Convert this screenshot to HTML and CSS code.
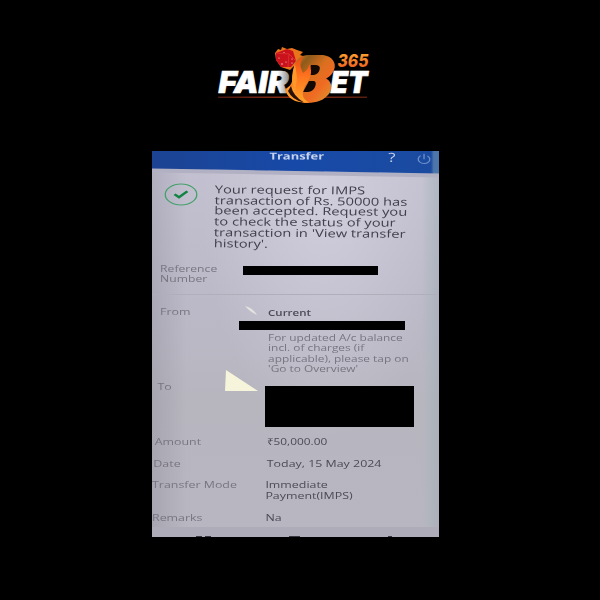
FILE: index.html
```html
<!DOCTYPE html>
<html lang="en">
<head>
<meta charset="utf-8">
<title>Fairbet365 transfer</title>
<link rel="stylesheet" href="styles.css">
</head>
<body>
<header class="brand">
<svg class="logo" width="165" height="70" viewBox="0 0 165 70" role="img" aria-label="Fairbet365">
  <defs>
    <linearGradient id="gold" x1="0" y1="0" x2="1" y2="1"><stop offset="0" stop-color="#e08a28"/><stop offset=".2" stop-color="#8d5a1a"/><stop offset=".45" stop-color="#d9701f"/><stop offset=".65" stop-color="#f06a22"/><stop offset="1" stop-color="#d8a033"/></linearGradient>
    <linearGradient id="flame" x1="0" y1="0" x2="0" y2="1"><stop offset="0" stop-color="#ef4a13"/><stop offset=".5" stop-color="#ff7a20"/><stop offset="1" stop-color="#ffa52a"/></linearGradient>
    <linearGradient id="num" x1="0" y1="0" x2="0" y2="1"><stop offset="0" stop-color="#ffae32"/><stop offset="1" stop-color="#e9571d"/></linearGradient>
    <linearGradient id="shade" x1="0" y1="0" x2="1" y2="0"><stop offset="0" stop-color="#fff"/><stop offset=".83" stop-color="#fff"/><stop offset="1" stop-color="#888"/></linearGradient>
    <linearGradient id="rule" x1="0" y1="0" x2="1" y2="0"><stop offset="0" stop-color="#5a1d10"/><stop offset=".5" stop-color="#b5391a"/><stop offset="1" stop-color="#6c2512"/></linearGradient>
  </defs>
  <rect x="8" y="56.6" width="149" height="1.2" fill="url(#rule)"/>
  <text class="word" x="8.500" y="53" textLength="70" lengthAdjust="spacingAndGlyphs" fill="url(#shade)" stroke="url(#shade)">FAIR</text>
  <text class="word" x="120.500" y="53" textLength="37" lengthAdjust="spacingAndGlyphs" fill="#fff" stroke="#fff">ET</text>
  <text class="number" x="127.5" y="27" textLength="31" lengthAdjust="spacingAndGlyphs" fill="url(#num)">365</text>
  <path d="M65 13 68 9 71 10 72 7 77 9 82 8 87 10 93 12 90 15 96 17 92 20 96 23 89 24 91 28 84 26 80 30 71 27 66 20Z" fill="#e8741c"/>
  <path d="M66 13 77 9 83 11 86 21 81 27 71 27 66 20Z" fill="#c9121b"/>
  <path d="M66 13 79 14 86 21M79 14 78 27" fill="none" stroke="#e23a35" stroke-width=".7"/>
  <g fill="#ffe4df"><circle cx="69" cy="18" r=".6"/><circle cx="72" cy="24" r=".7"/><circle cx="76" cy="22" r=".6"/><circle cx="82" cy="19" r=".6"/><circle cx="82" cy="23" r=".6"/><circle cx="74" cy="12.5" r=".5"/></g>
  <path d="M84 30C84 20 90 15 99 15H113C122 16 127 23 124 30C122 35 119 37 116 38.5C123 42 123 51 117 56C111 62 104 63 94 63L88 60Z" fill="url(#gold)"/>
  <path d="M101 25H106Q111 25.500 109.500 30Q108.500 34 104 35H99Z" fill="#130904"/>
  <path d="M99 41H104Q107 42 105 47Q103 51.500 98 52H93Z" fill="#130904"/>
  <path d="M99 24C104 33 99 40 95 46C92 53 91 58 99 62.500C87 63 77 58 75 49C81 47 83 41 83 34C83 25 87 20 94 16C88 24 91 28 93 33C97 30 99 28 99 24Z" fill="url(#flame)"/>
  <path d="M85 24C81 35 81 43 85 49C81 45 78 45 76 51C78 59 86 63 97 62.500C88 59 84 53 86 45C88 37 86 32 85 24Z" fill="#ff982a"/>
  <path d="M81 46Q83 56 94 62.500Q82 60 78 51" fill="#291006"/>
</svg>
</header>
<main class="photo">
  <div class="screen">
    <div class="bar"><span class="title">Transfer</span><span class="help">?</span>
      <svg class="power" width="11" height="12" viewBox="0 0 11 12"><path d="M3 2.4A4.3 4.3 0 1 0 8 2.4M5.5 .5V6" fill="none" stroke="currentColor"/></svg>
    </div>
    <div class="message">
      <svg class="ok" width="25" height="23" viewBox="0 0 25 23"><ellipse cx="12.5" cy="11.5" rx="11.7" ry="10.5" fill="none" stroke="#46a06c" stroke-width="1"/><path d="M7.7 11.2 11 14.3 17.2 8.3" fill="none" stroke="#118443" stroke-width="2.2"/></svg>
      <p>Your request for IMPS<br>transaction of Rs. 50000 has<br>been accepted. Request you<br>to check the status of your<br>transaction in 'View transfer<br>history'.</p>
    </div>
    <div class="row reference"><span class="label">Reference<br>Number</span></div>
    <div class="row from"><span class="label">From</span><div class="value"><b>Current</b><p class="note">For updated A/c balance<br>incl. of charges (if<br>applicable), please tap on<br>'Go to Overview'</p></div></div>
    <div class="row to"><span class="label">To</span></div>
    <div class="row amount"><span class="label">Amount</span><span class="value">₹50,000.00</span></div>
    <div class="row date"><span class="label">Date</span><span class="value">Today, 15 May 2024</span></div>
    <div class="row mode"><span class="label">Transfer Mode</span><span class="value">Immediate<br>Payment(IMPS)</span></div>
    <div class="row remarks"><span class="label">Remarks</span><span class="value">Na</span></div>
    <div class="foot"></div>
  </div>
  <svg class="glare" width="287" height="386" viewBox="0 0 287 386">
    <path d="M74 219 106 240H73Z" fill="#f7f4dc"/><path d="M93 155Q101 157 105 164Q98 161 93 155Z" fill="#e4e3df"/>
    <path d="M116 235.500h14m6 0h5m13 0h5m10 0h4m28 0h3" stroke="#77747f"/>
    <path d="M44 385.500h6m3 0h6m78 0h11m88 0h4" stroke="#383640" stroke-width="1"/>
  </svg>
  <i class="redact number-mask"></i><i class="redact account-mask"></i><i class="redact payee-mask"></i>
</main>
</body>
</html>
```
FILE: styles.css
```css
* { box-sizing: border-box; }
body { margin: 0; width: 600px; height: 600px; background: #000; overflow: hidden; font-family: "Open Sans", sans-serif; }
.brand { height: 151px; padding: 40px 0 0 210px; }
.logo { display: block; }
.word { font: italic 900 30px Inter, sans-serif; stroke-width: .7px; }
.number { font: italic 800 17.5px Inter, sans-serif; }
.photo {
  position: relative; width: 287px; height: 386px; margin-left: 152px; overflow: hidden;
  background: linear-gradient(90deg, rgba(70,70,85,.14), transparent 12%, transparent 94%, rgba(165,180,185,.4) 97%, rgba(150,165,175,.4)),
    radial-gradient(ellipse at 60% 12%, rgba(218,214,229,.6), transparent 50%),
    linear-gradient(#c4c2d2, #bbb9c7 40%, #b7b6bf 65%, #b8b6c1);
}
.screen {
  display: grid; width: 212.6px; height: 386px; transform: scaleX(1.35); transform-origin: 0 0;
  grid-template-rows: 20px 92px 32px 86px 55px 22px 21px 33px 15px 10px;
  color: #4c4a56; font-size: 9.2px; line-height: 10.7px; filter: blur(.35px);
}
p { margin: 0; }
.bar {
  display: flex; background: linear-gradient(90deg, #1c4392, #1749a8 50%, #1b4ba0 97%, #4d76aa 98%);
  height: 26px; margin-top: -6px; padding-top: 6px; color: #c8d4ed;
  transform: skewY(1.4deg); box-shadow: 0 4px 0 #b2b1c3; white-space: nowrap;
}
.title { width: 88px; margin-left: 87px; font-weight: 700; font-size: 9.6px; line-height: 10px; transform: skewY(-1.2deg); }
.help { width: 21px; font-size: 12.5px; line-height: 9px; }
.power { margin-top: -.5px; color: #6d8fca; }
.message { display: flex; padding: 12px 0 0 9px; font-size: 10.9px; color: #42404c; white-space: nowrap; }
.ok { flex: none; }
.message p { margin: 1.5px 0 0 11.5px; transform: skew(-.8deg, .6deg); }
.row { display: grid; grid-template-columns: 78px 1fr; white-space: nowrap; }
.label { color: #787581; }
.label, .date .value, .amount .value, .mode .value, .remarks .value { align-self: start; transform: scaleY(1.05); }
.reference { padding: .5px 6px 0; font-size: 9px; line-height: 10.1px; border-bottom: 1px solid #b0aebb; }
.from { padding: 11.5px 0 0 6px; grid-template-columns: 80px 1fr; }
.from b { font-weight: 600; font-size: 8.5px; display: block; padding-top: 1.5px; }
.note { margin-top: 14px; font-size: 8.8px; line-height: 10.4px; color: #787581; }
.to { padding: 1px 0 0 4px; }
.amount { padding: 1px 0 0 2px; grid-template-columns: 83px 1fr; }
.amount .value { font-size: 8.8px; font-weight: 500; }
.date { padding: 1px 0 0 1px; grid-template-columns: 84px 1fr; }
.mode { padding-top: 1px; grid-template-columns: 84px 1fr; }
.remarks { padding-top: 1px; grid-template-columns: 84px 1fr; }
.foot { background: #aeacb8; }
.glare { position: absolute; inset: 0; filter: blur(.6px); }
.redact { position: absolute; background: #000; }
.number-mask { left: 91px; top: 115px; width: 135px; height: 9px; }
.account-mask { left: 87px; top: 170px; width: 166px; height: 9px; }
.payee-mask { left: 113px; top: 235px; width: 149px; height: 41px; }
```
